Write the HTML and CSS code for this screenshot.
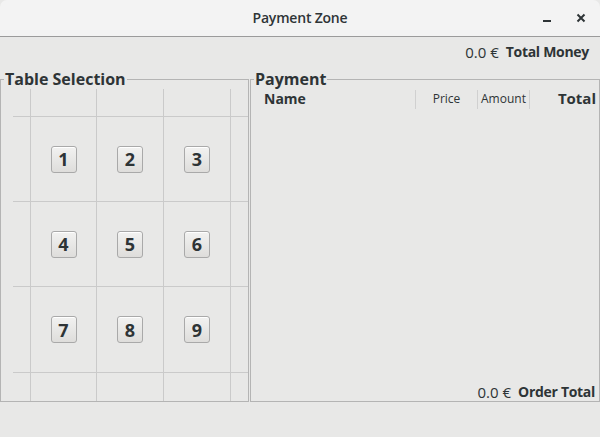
FILE: index.html
```html
<!DOCTYPE html>
<html>
<head>
<meta charset="utf-8">
<link rel="stylesheet" href="styles.css">
</head>
<body>
<div class="window">
  <header class="titlebar">
    <span></span>
    <span class="title">Payment Zone</span>
    <div class="controls">
      <svg class="ctl" width="10" height="10" viewBox="0 0 10 10"><rect x="1" y="7" width="8" height="2" fill="#2e3436"/></svg>
      <svg class="ctl" width="10" height="10" viewBox="0 0 10 10"><path d="M1.5 1.5 L8.5 8.5 M8.5 1.5 L1.5 8.5" stroke="#2e3436" stroke-width="2" fill="none"/></svg>
    </div>
  </header>
  <main class="content">
    <div class="money-row"><span class="amount">0.0 €</span><strong>Total Money</strong></div>
    <div class="panels">
      <fieldset class="panel tables">
        <legend>Table Selection</legend>
        <div class="grid">
          <div class="cell"></div><div class="cell"></div><div class="cell"></div><div class="cell"></div><div class="cell last-col"></div>
          <div class="cell"></div><div class="cell"><button class="tbtn">1</button></div><div class="cell"><button class="tbtn">2</button></div><div class="cell"><button class="tbtn">3</button></div><div class="cell last-col"></div>
          <div class="cell"></div><div class="cell"><button class="tbtn">4</button></div><div class="cell"><button class="tbtn">5</button></div><div class="cell"><button class="tbtn">6</button></div><div class="cell last-col"></div>
          <div class="cell"></div><div class="cell"><button class="tbtn">7</button></div><div class="cell"><button class="tbtn">8</button></div><div class="cell"><button class="tbtn">9</button></div><div class="cell last-col"></div>
          <div class="cell last-row"></div><div class="cell last-row"></div><div class="cell last-row"></div><div class="cell last-row"></div><div class="cell last-row last-col"></div>
        </div>
      </fieldset>
      <fieldset class="panel payment">
        <legend>Payment</legend>
        <div class="thead">
          <div class="th name">Name</div>
          <div class="th price">Price</div>
          <div class="th amt">Amount</div>
          <div class="th total">Total</div>
        </div>
        <div class="tbody"></div>
        <div class="order-total"><span class="amount">0.0 €</span><strong>Order Total</strong></div>
      </fieldset>
    </div>
    <div class="statusbar"></div>
  </main>
</div>
</body>
</html>
```
FILE: styles.css
```css
* { box-sizing: border-box; }
html, body { margin: 0; padding: 0; }
body {
  width: 600px;
  height: 437px;
  background: #e8e8e7;
  font-family: "Open Sans", "DejaVu Sans", sans-serif;
  color: #2e3436;
  overflow: hidden;
}
.window { width: 600px; height: 437px; display: flex; flex-direction: column; }
.titlebar {
  height: 37px;
  flex: none;
  background: #f3f3f3;
  border-bottom: 1px solid #9b9b9b;
  border-radius: 7px 7px 0 0;
  display: grid;
  grid-template-columns: 1fr auto 1fr;
  align-items: center;
}
.title { font-size: 14px; font-weight: 600; line-height: 18px; letter-spacing: -0.2px; }
.controls { display: flex; justify-content: flex-end; gap: 24px; padding-right: 14px; }
.ctl { display: block; }
.content { flex: 1; display: flex; flex-direction: column; }
.money-row {
  height: 33px;
  flex: none;
  display: flex;
  justify-content: flex-end;
  align-items: center;
  padding: 0 11px 3px 0;
  font-size: 14px;
  line-height: 18px;
  gap: 7px;
}
.amount { font-weight: 400; font-size: 15px; }
strong { font-weight: 700; letter-spacing: -0.3px; }
.panels {
  display: grid;
  grid-template-columns: 249px 350px;
  column-gap: 1px;
  height: 332px;
  flex: none;
}
.panel {
  margin: 0;
  padding: 0;
  border: 1px solid #b4b4b4;
  min-width: 0;
  display: flex;
  flex-direction: column;
}
.panel legend {
  font-size: 16px;
  font-weight: 700;
  line-height: 18px;
  padding: 0 1px;
  margin-left: 3px;
}
.grid {
  flex: 1;
  margin: 1px 0 0 12px;
  display: grid;
  grid-template-columns: 18px 66px 67px 67px 1fr;
  grid-template-rows: 28px 85px 85px 86px 1fr;
}
.cell {
  border-right: 1px solid #cacaca;
  border-bottom: 1px solid #cacaca;
  display: flex;
  align-items: center;
  justify-content: center;
}
.cell.last-col { border-right: 0; }
.cell.last-row { border-bottom: 0; }
.tbtn {
  width: 26px;
  height: 27px;
  padding: 0;
  margin: 0;
  border: 1px solid #a9a9a9;
  border-radius: 3px;
  background: linear-gradient(#f2f2f1, #dedddb);
  box-shadow: inset 0 1px #ffffff;
  font-family: "Open Sans", "DejaVu Sans", sans-serif;
  font-size: 18px;
  font-weight: 700;
  color: #2e3436;
  line-height: 1;
}
.thead {
  margin-top: 1px;
  height: 20px;
  display: grid;
  grid-template-columns: 165px 62px 52px 1fr;
  align-items: center;
}
.th { height: 19px; display: flex; align-items: center; line-height: 18px; }
.th.name, .th.price, .th.amt { border-right: 1px solid #d0d0d0; }
.th.name { font-size: 14px; font-weight: 700; padding-left: 13px; }
.th.price, .th.amt { font-size: 12px; justify-content: center; }
.th.total { font-size: 15px; font-weight: 700; justify-content: flex-end; padding-right: 3px; padding-bottom: 2px; }
.tbody { flex: 1; }
.order-total {
  height: 18px;
  display: flex;
  justify-content: flex-end;
  align-items: center;
  gap: 7px;
  padding: 0 4px 0 0;
  font-size: 14px;
  line-height: 18px;
}
.statusbar { flex: 1; }
```
